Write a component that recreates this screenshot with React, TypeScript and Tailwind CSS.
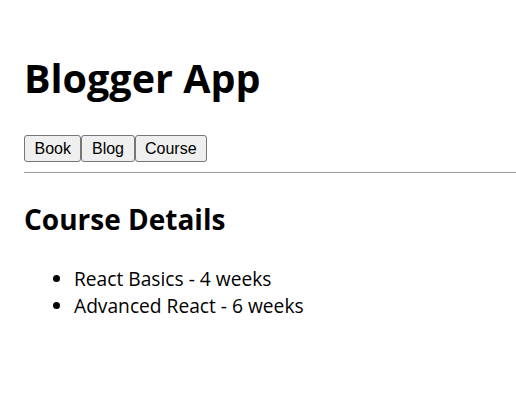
import React, { useState } from "react";

const courses = ["React Basics - 4 weeks", "Advanced React - 6 weeks"];

const tabs = ["Book", "Blog", "Course"];

const App: React.FC = () => {
  const [tab, setTab] = useState("Course");

  return (
    <div className="min-h-[403px] bg-white pl-6 text-black font-['Open_Sans',sans-serif]">
      <h1 className="pt-[54px] text-[39.5px] font-bold leading-[48px]">Blogger App</h1>
      <div className="mt-[33px] flex">
        {tabs.map((t) => (
          <button
            key={t}
            onClick={() => setTab(t)}
            className="h-[27px] rounded-[3px] border border-[#767676] bg-[#efefef] px-[9.5px] font-['Liberation_Sans',Arial,sans-serif] text-[16px] leading-none text-black"
          >
            {t}
          </button>
        ))}
      </div>
      <hr className="mt-[10px] border-t border-[#9a9a9a]" />
      {tab === "Course" && (
        <div>
          <h2 className="mt-[28px] text-[28px] font-bold leading-[36px]">Course Details</h2>
          <ul className="mt-[28px] list-disc pl-[50px] text-[19.2px] leading-[27px]">
            {courses.map((c) => (
              <li key={c}>{c}</li>
            ))}
          </ul>
        </div>
      )}
    </div>
  );
};

export default App;
